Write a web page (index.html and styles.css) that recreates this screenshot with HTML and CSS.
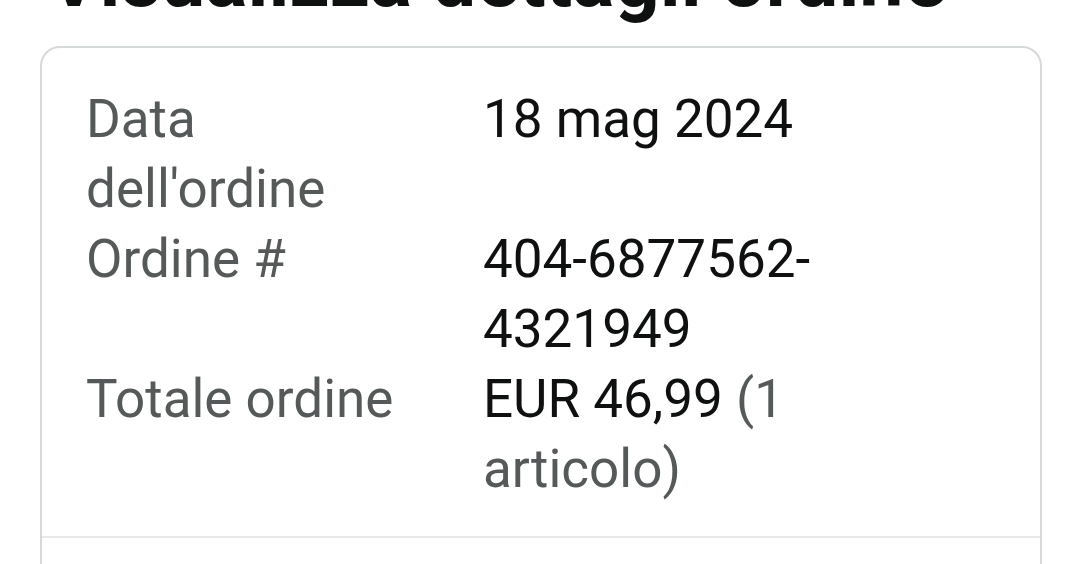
FILE: index.html
```html
<!DOCTYPE html>
<html lang="it">
<head>
<meta charset="utf-8">
<title>Visualizza dettagli ordine</title>
<link rel="stylesheet" href="styles.css">
</head>
<body>
<main class="page">
  <h1 class="title">Visualizza dettagli ordine</h1>
  <section class="card">
    <div class="section details">
      <div class="label">Data dell'ordine</div>
      <div class="value">18 mag 2024</div>
      <div class="label">Ordine #</div>
      <div class="value">404-6877562-4321949</div>
      <div class="label">Totale ordine</div>
      <div class="value">EUR 46,99 <span class="muted">(1 articolo)</span></div>
    </div>
    <div class="section next"></div>
  </section>
</main>
</body>
</html>
```
FILE: styles.css
```css
html, body {
  margin: 0;
  padding: 0;
  background: #ffffff;
  overflow: hidden;
}
body {
  font-family: Roboto, "Noto Sans", Arial, sans-serif;
  color: #0f1111;
}
.page {
  margin-top: -60px;
  padding: 0 38px 0 40px;
}
.title {
  margin: 0 0 28px 8px;
  font-size: 79px;
  line-height: 78px;
  font-weight: 700;
  color: #0f1111;
  white-space: nowrap;
}
.card {
  width: 998px;
  border: 2px solid #d5d9d9;
  border-radius: 20px;
  background: #fff;
}
.section.details {
  display: grid;
  grid-template-columns: 340px 360px;
  column-gap: 57px;
  padding: 36px 44px 32px 44px;
  font-size: 53px;
  line-height: 70px;
  border-bottom: 2px solid #e7e9e9;
}
.label {
  color: #565959;
}
.value {
  color: #0f1111;
}
.muted {
  color: #565959;
}
.section.next {
  height: 120px;
}
```
